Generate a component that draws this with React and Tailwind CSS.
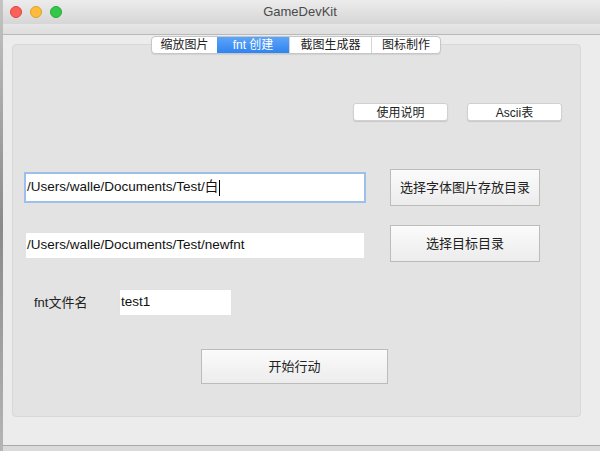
import React from 'react';

const font = { fontFamily: '"Liberation Sans", "Noto Sans CJK SC", sans-serif' };

const tabs = ['缩放图片', 'fnt 创建', '截图生成器', '图标制作'];
const tabWidths = ['w-[65px]', 'w-[72px]', 'w-[82px]', 'w-[69px]'];

const GrayButton = ({ children, className = '' }) => (
  <button
    className={`flex items-center justify-center border border-[#bcbcbc] bg-gradient-to-b from-[#fbfbfb] to-[#ececec] text-[13px] text-[#222] ${className}`}
  >
    {children}
  </button>
);

const App = () => {
  return (
    <div className="flex w-[600px] h-[451px] overflow-hidden bg-[#dcdcdc]" style={font}>
      {/* desktop strip on the left */}
      <div className="w-[3px] h-full bg-gradient-to-b from-[#c4c4c4] via-[#8a8a8a] to-[#b5b5b5]" />

      <div className="flex flex-col flex-1 h-full">
        {/* title bar */}
        <div className="relative flex items-center h-[24px] bg-gradient-to-b from-[#ececec] to-[#d6d6d6]">
          <div className="flex items-center gap-[8px] pl-[7px]">
            <span className="w-[12px] h-[12px] rounded-full bg-[#fc605c] border border-[#e0443e]" />
            <span className="w-[12px] h-[12px] rounded-full bg-[#fdbc40] border border-[#dea123]" />
            <span className="w-[12px] h-[12px] rounded-full bg-[#34c84a] border border-[#27aa35]" />
          </div>
          <div className="absolute inset-0 flex items-center justify-center pr-[3px] text-[13px] text-[#4a4a4a]">
            GameDevKit
          </div>
        </div>
        <div className="h-[11px] bg-gradient-to-b from-[#e6e6e6] to-[#dedede] border-b border-[#b9b9b9]" />

        {/* content */}
        <div className="flex-1 bg-[#ececec] pt-[1px]">
          <div className="relative z-10 flex justify-center pr-[11px]">
            <div className="flex h-[18px] rounded-[4px] border border-[#c6c6c6] bg-white shadow-[0_1px_1px_rgba(0,0,0,0.08)] overflow-hidden text-[12px]">
              {tabs.map((t, i) => (
                <div
                  key={t}
                  className={`flex items-center justify-center ${tabWidths[i]} ${
                    i === 1
                      ? 'bg-gradient-to-b from-[#5ba4f8] to-[#2f84f0] text-white'
                      : 'text-[#222]'
                  } ${i > 1 ? 'border-l border-[#d4d4d4]' : ''}`}
                >
                  {t}
                </div>
              ))}
            </div>
          </div>

          <div className="-mt-[10px] ml-[9px] w-[569px] h-[373px] rounded-[4px] bg-[#e3e3e3] border border-[#d8d8d8] flex flex-col">
            {/* help buttons */}
            <div className="mt-[58px] flex justify-end gap-[19px] pr-[18px]">
              <button className="w-[95px] h-[18px] rounded-[3px] bg-white border border-[#d0d0d0] shadow-[0_1px_1px_rgba(0,0,0,0.12)] text-[12px] text-[#222]">
                使用说明
              </button>
              <button className="w-[95px] h-[18px] rounded-[3px] bg-white border border-[#d0d0d0] shadow-[0_1px_1px_rgba(0,0,0,0.12)] text-[12px] text-[#222]">
                Ascii表
              </button>
            </div>

            {/* font dir */}
            <div className="mt-[48px] flex items-center h-[37px]">
              <div className="ml-[11px] w-[342px] h-[31px] flex items-center bg-white border-2 border-[#9cc0ea] px-[1px] text-[13.5px] text-[#111]">
                /Users/walle/Documents/Test/白<span className="ml-[1px] w-px h-[16px] bg-black" />
              </div>
              <GrayButton className="ml-[24px] w-[150px] h-[37px]">选择字体图片存放目录</GrayButton>
            </div>

            {/* target dir */}
            <div className="mt-[19px] flex items-center h-[37px]">
              <div className="ml-[12px] w-[340px] h-[27px] mt-[4px] flex items-center bg-white border border-[#e2e2e2] px-[1px] text-[13.5px] text-[#111]">
                /Users/walle/Documents/Test/newfnt
              </div>
              <GrayButton className="ml-[25px] w-[150px] h-[37px]">选择目标目录</GrayButton>
            </div>

            {/* fnt name */}
            <div className="mt-[27px] flex items-center h-[27px]">
              <span className="ml-[21px] w-[85px] text-[13px] text-[#222]">fnt文件名</span>
              <div className="w-[113px] h-[27px] flex items-center bg-white border border-[#e2e2e2] px-[1px] text-[13.5px] text-[#111]">
                test1
              </div>
            </div>

            {/* start */}
            <div className="mt-[33px] flex">
              <GrayButton className="ml-[188px] w-[187px] h-[35px]">开始行动</GrayButton>
            </div>
          </div>
        </div>

        {/* bottom edge */}
        <div className="h-[6px] border-t border-[#a9a9a9] bg-[#dadada]" />
      </div>
    </div>
  );
};

export default App;
